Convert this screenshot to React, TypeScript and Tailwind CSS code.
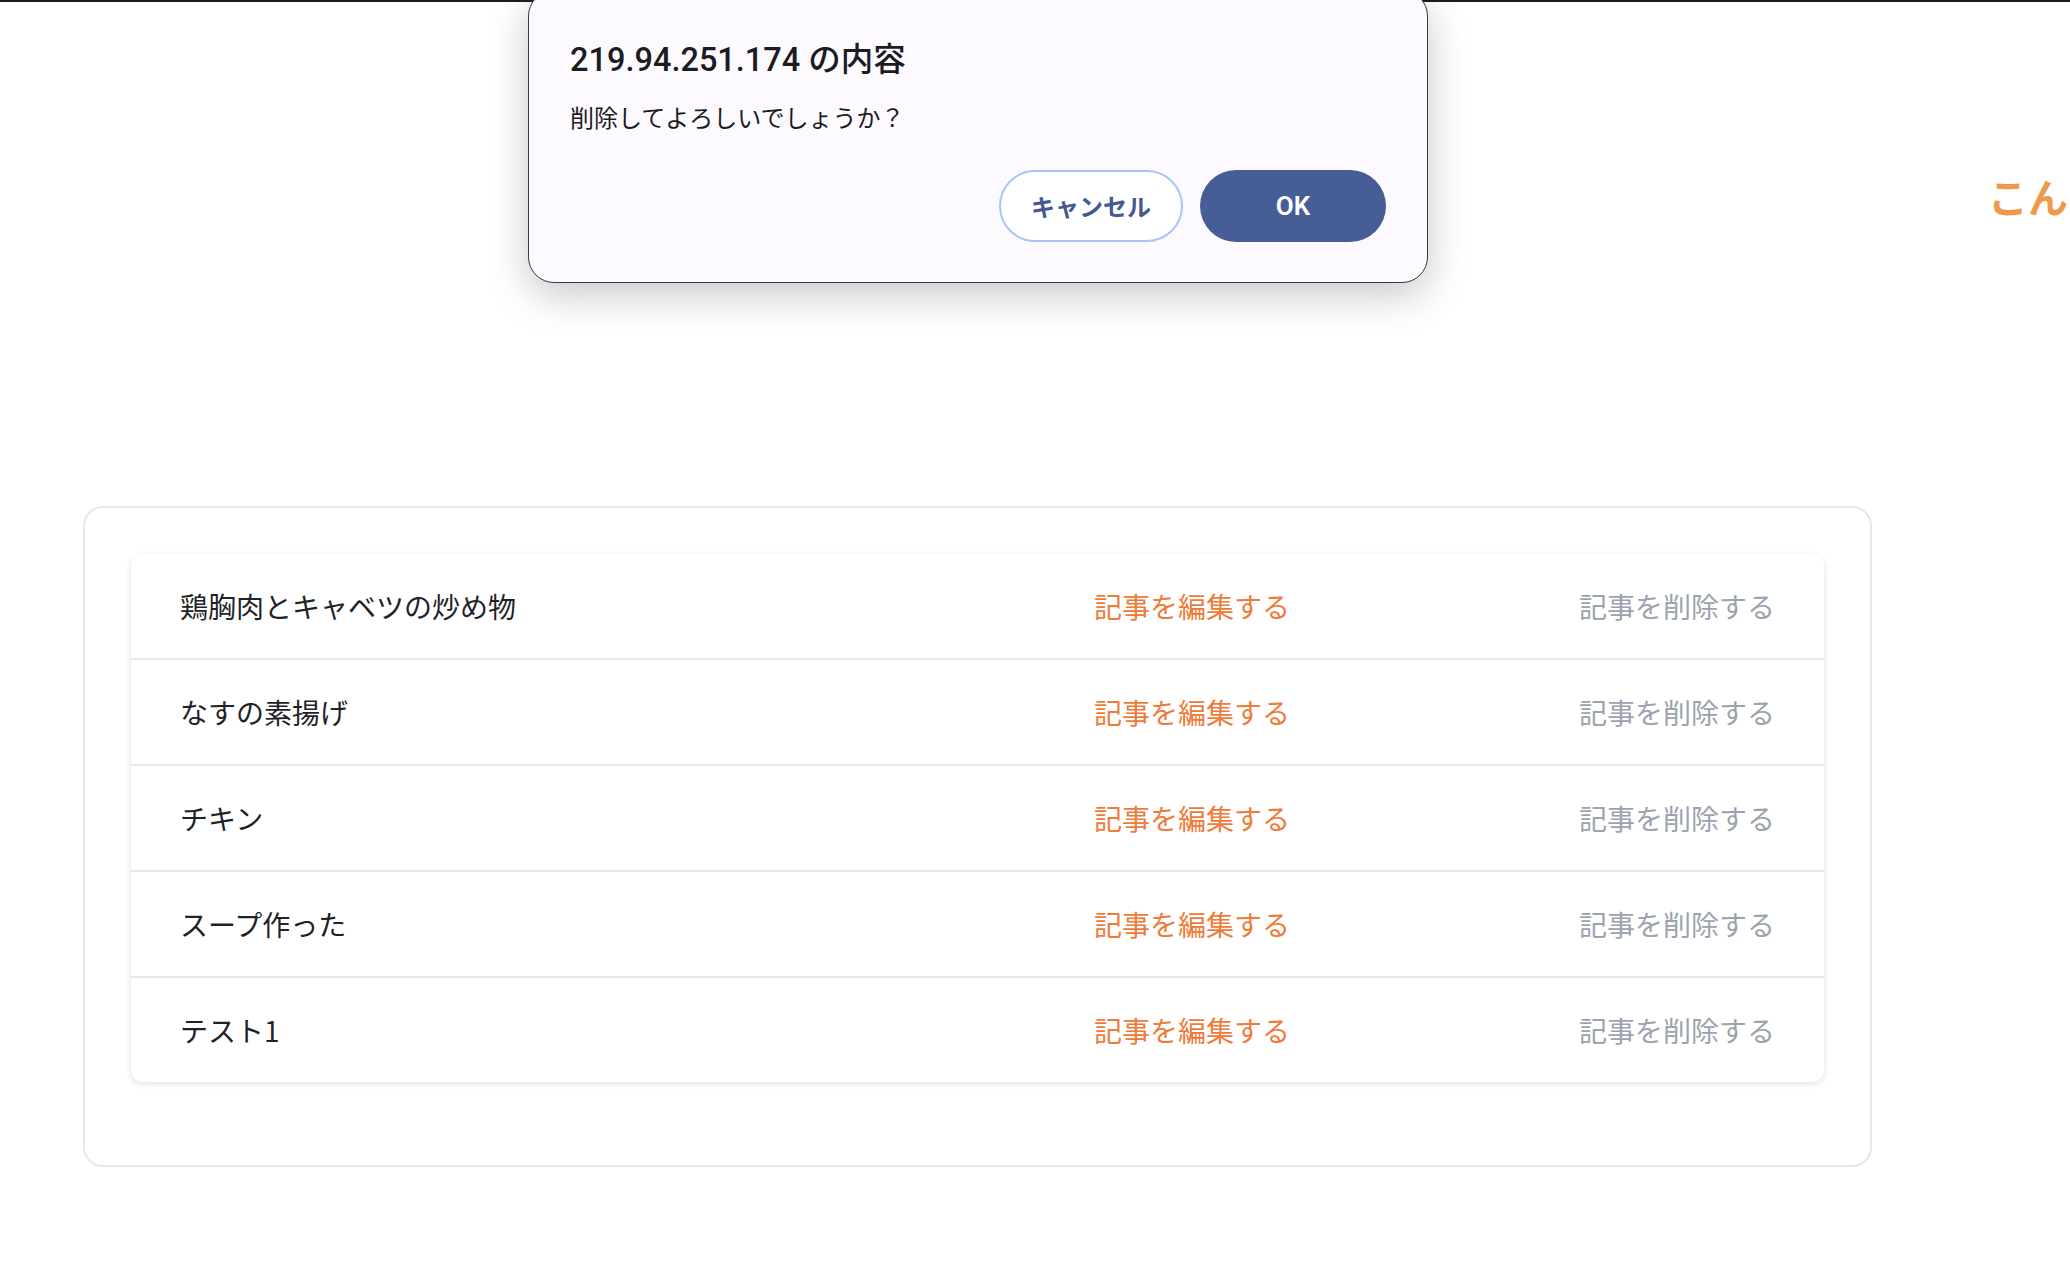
import React from "react";

const rows = ["鶏胸肉とキャベツの炒め物", "なすの素揚げ", "チキン", "スープ作った", "テスト1"];

export default function App() {
  return (
    <div
      className="relative w-[2070px] h-[1280px] overflow-hidden bg-white"
      style={{ fontFamily: '"Noto Sans CJK JP", "Noto Sans", sans-serif' }}
    >
      <div className="h-[2px] bg-[#1c1c1e]" />
      <div className="mt-[174px] h-[40px] flex">
        <span className="ml-[1988px] whitespace-nowrap text-[40px] leading-[40px] font-bold text-[#ee9a4d]">
          こんにちは
        </span>
      </div>
      <main className="mt-[290px] ml-[83px] w-[1789px] rounded-[20px] border-2 border-[#e5e7eb] px-[46px] pt-[46px] pb-[83px]">
        <div className="rounded-xl bg-white shadow-[0_2px_6px_rgba(0,0,0,0.12)]">
          {rows.map((r, i) => (
            <div
              key={i}
              className={`flex h-[104px] items-center px-[49px] text-[28px] ${
                i < rows.length - 1 ? "border-b-2 border-[#e5e7eb]" : ""
              }`}
              style={{ boxSizing: "content-box" }}
            >
              <span className="flex-1 text-[#1f2328]">{r}</span>
              <span className="text-[#ef7b38]">記事を編集する</span>
              <span className="ml-[289px] text-[#9ca3af]">記事を削除する</span>
            </div>
          ))}
        </div>
      </main>

      <div className="absolute left-[528px] top-[-10px] w-[900px] rounded-[26px] border border-[#3a3a3c] bg-[#fcfaff] pl-[41px] pr-[41px] pt-[49px] pb-[40px] shadow-[0_12px_40px_rgba(0,0,0,0.22)]">
        <div
          className="h-[40px] text-[32.5px] leading-[40px] font-medium text-[#1c1b1f]"
          style={{ fontFamily: 'Roboto, "Noto Sans CJK JP", sans-serif' }}
        >
          219.94.251.174 の内容
        </div>
        <div className="mt-[21px] h-[32px] text-[24px] leading-[32px] text-[#1c1b1f]">
          削除してよろしいでしょうか？
        </div>
        <div className="mt-[37px] flex justify-end gap-[17px]">
          <button className="h-[72px] w-[184px] rounded-full border-2 border-[#a9c4f7] bg-white text-[24px] font-semibold text-[#44598f]">
            キャンセル
          </button>
          <button
            className="h-[72px] w-[186px] rounded-full bg-[#475d95] text-[26px] font-semibold text-white"
            style={{ fontFamily: 'Roboto, "Noto Sans CJK JP", sans-serif' }}
          >
            OK
          </button>
        </div>
      </div>
    </div>
  );
}
